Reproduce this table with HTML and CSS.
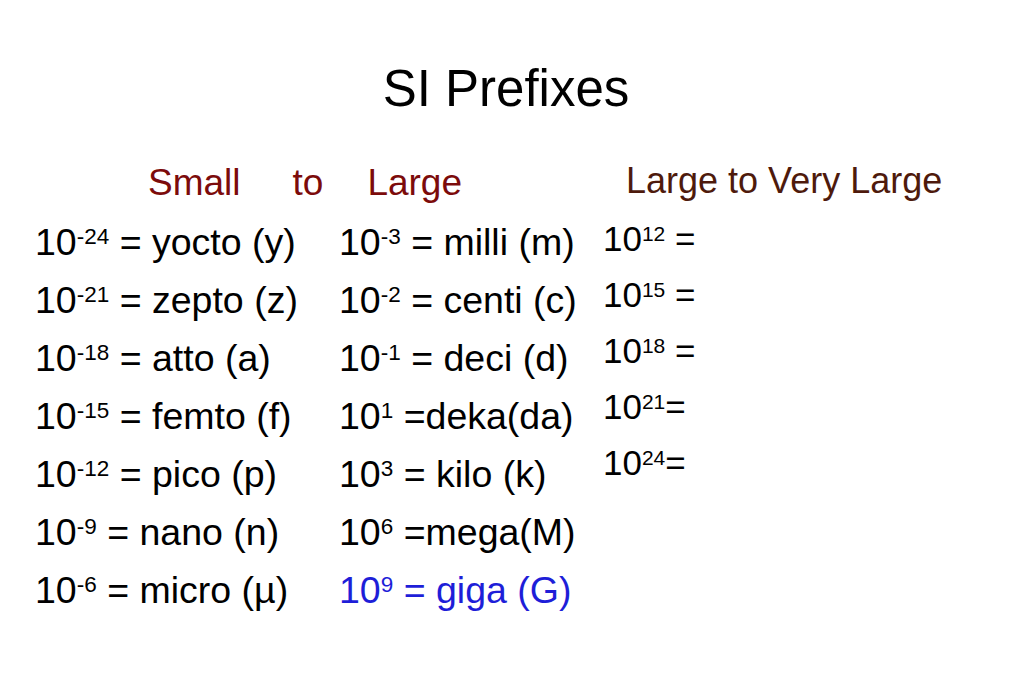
FILE: index.html
```html
<!DOCTYPE html>
<html lang="en">
<head>
<meta charset="utf-8">
<title>SI Prefixes</title>
<link rel="stylesheet" href="styles.css">
</head>
<body>
<div class="slide">
  <h1 class="title">SI Prefixes</h1>
  <div class="content">
    <section class="small-large">
      <h2 class="head head-left"><span>Small</span><span class="w-to">to</span><span class="w-large">Large</span></h2>
      <div class="grid">
        <div class="cell">10<sup>-24</sup> = yocto (y)</div>
        <div class="cell">10<sup>-3</sup> = milli (m)</div>
        <div class="cell">10<sup>-21</sup> = zepto (z)</div>
        <div class="cell">10<sup>-2</sup> = centi (c)</div>
        <div class="cell">10<sup>-18</sup> = atto (a)</div>
        <div class="cell">10<sup>-1</sup> = deci (d)</div>
        <div class="cell">10<sup>-15</sup> = femto (f)</div>
        <div class="cell">10<sup>1</sup> =deka(da)</div>
        <div class="cell">10<sup>-12</sup> = pico (p)</div>
        <div class="cell">10<sup>3</sup> = kilo (k)</div>
        <div class="cell">10<sup>-9</sup> = nano (n)</div>
        <div class="cell">10<sup>6</sup> =mega(M)</div>
        <div class="cell">10<sup>-6</sup> = micro (µ)</div>
        <div class="cell blue">10<sup>9</sup> = giga (G)</div>
      </div>
    </section>
    <section class="large-very">
      <h2 class="head head-right">Large to Very Large</h2>
      <div class="list">
        <div class="item">10<sup>12</sup> =</div>
        <div class="item">10<sup>15</sup> =</div>
        <div class="item">10<sup>18</sup> =</div>
        <div class="item">10<sup>21</sup>=</div>
        <div class="item">10<sup>24</sup>=</div>
      </div>
    </section>
  </div>
</div>
</body>
</html>
```

FILE: styles.css
```css
html, body {
  margin: 0;
  padding: 0;
  background: #ffffff;
}

body {
  font-family: "Liberation Sans", Arial, sans-serif;
  color: #000000;
}

.slide {
  width: 1024px;
  height: 683px;
  overflow: hidden;
}

.title {
  margin: 63px 0 0;
  padding-right: 12px;
  text-align: center;
  font-size: 51px;
  line-height: 51px;
  font-weight: normal;
}

.content {
  display: flex;
  margin-top: 47px;
}

.small-large {
  margin-left: 35px;
  width: 568px;
}

.head {
  margin: 0;
  font-weight: normal;
  line-height: 44px;
  white-space: nowrap;
}

.head-left {
  display: flex;
  padding-left: 113px;
  font-size: 37px;
  color: #7c0b0b;
}

.w-to {
  margin-left: 52px;
}

.w-large {
  margin-left: 44px;
}

.grid {
  display: grid;
  grid-template-columns: 304px auto;
  margin-top: 8px;
}

.cell {
  font-size: 37.5px;
  line-height: 58px;
  white-space: nowrap;
}

.blue {
  color: #1e1ed8;
}

sup {
  font-size: 0.6em;
  line-height: 0;
  vertical-align: 0.5em;
}

.large-very {
  flex: 1;
}

.head-right {
  padding-left: 23px;
  font-size: 36px;
  color: #4e1a0c;
  margin-top: -2px;
}

.list {
  margin-top: 8px;
}

.item {
  font-size: 35px;
  line-height: 56px;
  white-space: nowrap;
}
```
